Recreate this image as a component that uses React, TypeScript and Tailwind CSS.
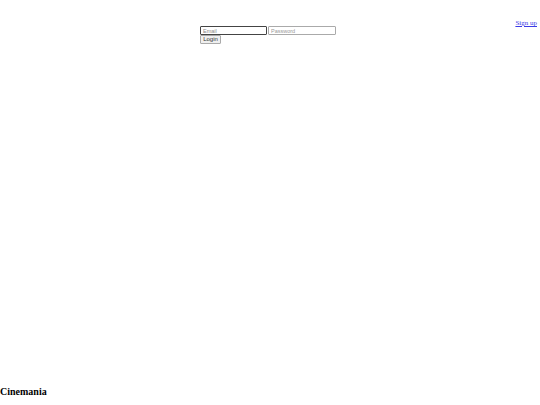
export default function App() {
  return (
    <div className="h-[405px] w-[540px] flex flex-col bg-white font-['Liberation_Serif',serif] text-black">
      <div className="flex justify-end pr-[3px] pt-[19px] h-[26px]">
        <a href="#" className="text-[7px] leading-[8px] text-[#3a3ae6] underline">Sign up</a>
      </div>
      <form className="w-[140px] mx-auto flex flex-wrap items-start gap-x-[1px]">
        <input
          type="email"
          placeholder="Email"
          className="w-[67px] h-[9px] border-[1.5px] border-[#444] rounded-[1px] px-[2px] text-[5.5px] font-['Liberation_Sans',sans-serif] placeholder:text-[#888] outline-none"
        />
        <input
          type="password"
          placeholder="Password"
          className="w-[68px] h-[9px] border border-[#aaa] rounded-[1px] px-[2px] text-[5.5px] font-['Liberation_Sans',sans-serif] placeholder:text-[#999] outline-none"
        />
        <button
          type="button"
          className="h-[9px] w-[21px] border border-[#aaa] rounded-[1px] bg-[#efefef] text-[6px] leading-[7px] font-normal text-[#333] font-['Liberation_Sans',sans-serif]"
        >
          Login
        </button>
      </form>
      <div className="flex-1" />
      <h1 className="pb-[8px] text-[10px] leading-[10px] font-bold">Cinemania</h1>
    </div>
  );
}
